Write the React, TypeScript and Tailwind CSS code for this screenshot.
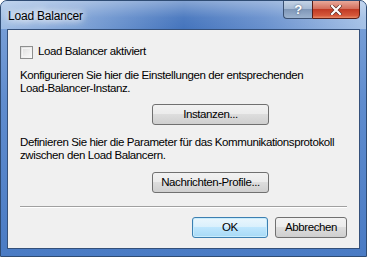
export default function App() {
  const font = { fontFamily: '"Liberation Sans", Arial, sans-serif' };
  const btn =
    "h-[21px] rounded-[3px] border border-[#707070] bg-[linear-gradient(to_bottom,#f2f2f2_0%,#ebebeb_50%,#dddddd_50%,#cfcfcf_100%)] text-[11.5px] leading-none tracking-[-0.4px] whitespace-nowrap";
  return (
    <div
      className="w-[367px] h-[257px] relative overflow-hidden rounded-t-[7px] border border-[#2f4c74] bg-[linear-gradient(to_bottom,#7fa4d9_0%,#5f8cce_40%,#4a7bc4_100%)] flex flex-col text-[11.5px] text-black tracking-[-0.4px]"
      style={font}
    >
      {/* title bar */}
      <div className="h-[28px] shrink-0 bg-[linear-gradient(to_right,#9fbde4_0%,#7ea2d6_22%,#4474bd_50%,#6890cd_72%,#a6c2e7_100%)]">
        <div className="h-full flex items-start justify-between bg-[linear-gradient(to_bottom,rgba(255,255,255,0.35),rgba(255,255,255,0.05)_60%,rgba(255,255,255,0))]">
          <div className="pl-[7px] pt-[7px] text-[12px] leading-[16px] tracking-[-0.2px] [text-shadow:0_0_6px_#fff,0_0_10px_#fff,0_0_12px_#fff]">
            Load Balancer
          </div>
          <div className="flex mr-[6px] -mt-px">
            <div className="w-[29px] h-[19px] rounded-bl-[4px] border border-[#3b5172] border-r-0 bg-[linear-gradient(to_bottom,#c4d3e6_0%,#a6bad4_45%,#7f97b8_50%,#9db3cf_100%)] flex items-center justify-center">
              <span className="text-white font-bold text-[13px] leading-none [text-shadow:0_0_2px_#3b5172]">?</span>
            </div>
            <div className="w-[48px] h-[19px] rounded-br-[4px] border border-[#5a1e17] bg-[linear-gradient(to_bottom,#e9a99a_0%,#d46f5d_45%,#c13b25_50%,#d5573a_85%,#e88c6a_100%)] flex items-center justify-center">
              <svg width="12" height="10" viewBox="0 0 12 10">
                <path d="M2 1 L10 9 M10 1 L2 9" stroke="#5a2a22" strokeWidth="3.4" strokeLinecap="square" />
                <path d="M2 1 L10 9 M10 1 L2 9" stroke="#fff" strokeWidth="2.2" strokeLinecap="square" />
              </svg>
            </div>
          </div>
        </div>
      </div>

      {/* client area */}
      <div className="flex-1 mx-[6px] mb-[7px] border border-[#34507a] bg-[#f0f0f0] flex flex-col px-[12px] whitespace-nowrap">
        <label className="flex items-center gap-[5px] mt-[15px] h-[14px]">
          <span className="w-[13px] h-[13px] border border-[#8e8f8f] bg-[linear-gradient(135deg,#dcdcdc,#fcfcfc)] shrink-0 p-px">
            <span className="block w-full h-full border border-[#f4f4f4]"></span>
          </span>
          <span>Load Balancer aktiviert</span>
        </label>

        <p className="mt-[10px] leading-[13px]">
          Konfigurieren Sie hier die Einstellungen der entsprechenden
          <br />
          Load-Balancer-Instanz.
        </p>

        <div className="flex mt-[9px] pl-[132px]">
          <button className={`${btn} w-[117px]`}>Instanzen...</button>
        </div>

        <p className="mt-[11px] leading-[13px]">
          Definieren Sie hier die Parameter für das Kommunikationsprotokoll
          <br />
          zwischen den Load Balancern.
        </p>

        <div className="flex mt-[10px] pl-[132px]">
          <button className={`${btn} w-[117px]`}>Nachrichten-Profile...</button>
        </div>

        <div className="mt-[13px] h-[2px] border-t border-[#a0a0a0] border-b border-b-white"></div>

        <div className="flex justify-end gap-[7px] mt-[9px]">
          <button className="w-[76px] h-[21px] rounded-[3px] border border-[#3c7fb1] bg-[linear-gradient(to_bottom,#eaf6fd_0%,#d9f0fc_50%,#bee6fd_50%,#a7d9f5_100%)] text-[11.5px] leading-none tracking-[-0.4px] shadow-[inset_0_0_0_1px_#c8ecfc]">
            OK
          </button>
          <button className={`${btn} w-[72px]`}>Abbrechen</button>
        </div>
      </div>
    </div>
  );
}
